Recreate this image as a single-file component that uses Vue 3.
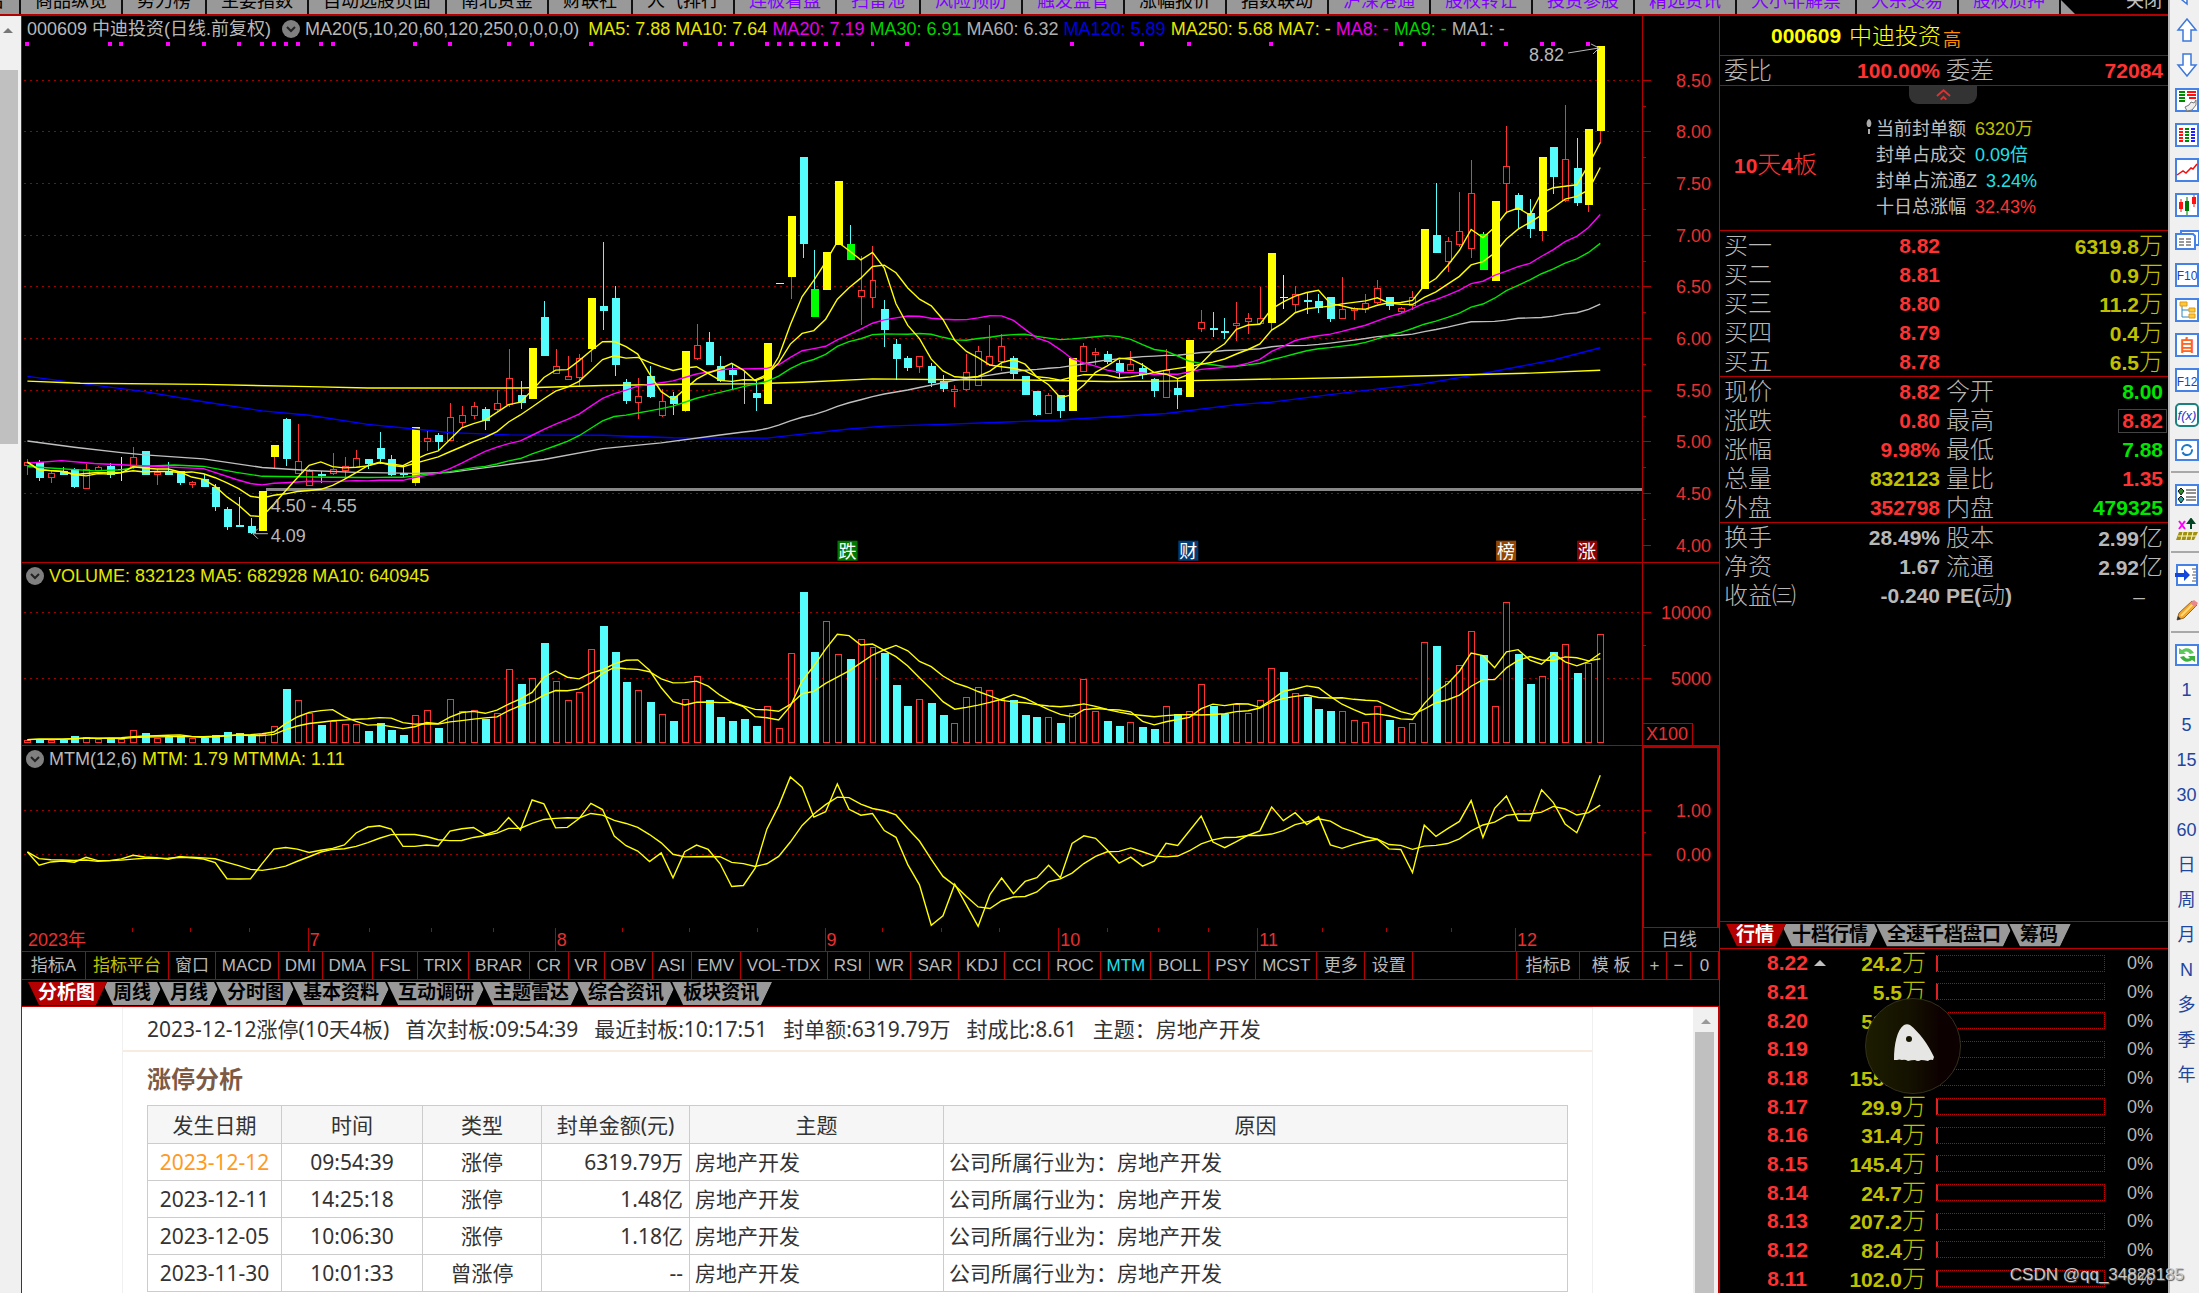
<script setup>
// Candles: [kind, body top, body bottom, high, low]. Kinds: R hollow rise, C fall,
// Y limit-up, G limit-down side, W/w flat. Heights are in plot units (PU per pixel).
const PU = 2.751
const OFF = 16
const raw = `R 1272 1280 1262 1306|C 1270 1314 1266 1322|R 1300 1313 1296 1330|C 1296 1306 1284 1306|C 1290 1339 1288 1343|R 1290 1342 1276 1342|R 1284 1294 1282 1296|C 1281 1306 1275 1314|w 1289 1291 1256 1322|R 1256 1282 1229 1290|C 1242 1306 1242 1306|R 1298 1304 1290 1335|C 1296 1306 1270 1308|C 1297 1330 1295 1335|R 1325 1328 1323 1342|C 1317 1339 1304 1339|C 1340 1395 1332 1405|C 1401 1450 1395 1459|C 1443 1446 1368 1449|C 1448 1467 1425 1469|Y 1352 1462 1352 1462|Y 1225 1256 1225 1290|C 1154 1264 1150 1281|R 1267 1300 1166 1300|R 1296 1333 1290 1338|C 1303 1306 1297 1328|R 1289 1300 1245 1306|R 1281 1292 1258 1318|R 1259 1284 1237 1287|C 1262 1276 1262 1290|C 1233 1264 1188 1276|C 1262 1306 1253 1309|C 1300 1303 1285 1312|Y 1176 1330 1176 1338|R 1206 1214 1187 1240|C 1196 1215 1190 1240|R 1148 1210 1109 1212|R 1143 1160 1118 1175|R 1118 1143 1106 1153|C 1126 1157 1120 1182|R 1109 1124 1072 1132|R 1041 1112 961 1120|C 1088 1109 1047 1124|Y 957 1098 957 1098|C 873 979 828 979|R 1007 1027 961 1030|R 1034 1044 980 1046|R 986 1036 973 1065|Y 821 959 821 997|C 841 856 667 907|C 821 1003 788 1034|C 1052 1104 1044 1111|R 1090 1107 1040 1153|C 1035 1091 1007 1096|R 1102 1143 1070 1148|C 1089 1111 1078 1141|Y 965 1130 965 1133|R 950 986 890 990|C 940 1005 914 1005|C 1006 1048 978 1052|C 1018 1032 1000 1074|W 1060 1060 1022 1112|C 1080 1095 1045 1130|Y 944 1111 944 1111|Y 779 781 779 781|Y 593 761 593 823|C 432 670 432 711|G 795 873 688 873|Y 692 799 692 799|Y 498 675 498 675|G 672 716 618 716|R 797 814 705 894|R 771 818 676 848|C 849 909 824 955|C 947 988 932 1046|C 986 1013 978 1021|R 979 1008 979 1025|C 1006 1054 998 1065|C 1047 1070 1031 1078|R 1069 1077 1060 1120|R 1023 1069 973 1076|R 966 1060 952 1062|R 979 1000 895 1006|R 953 994 920 1021|C 986 1028 980 1043|C 1034 1087 1034 1087|C 1077 1141 1077 1145|R 1086 1136 1082 1140|C 1086 1132 1086 1149|Y 986 1130 986 1130|R 953 1020 944 1022|R 968 970 957 1003|C 973 997 965 1000|C 998 1025 990 1040|R 1000 1017 965 1018|C 1013 1032 998 1043|C 1044 1075 1040 1091|R 1018 1091 960 1094|C 1067 1087 1044 1124|Y 936 1091 936 1091|R 887 901 853 914|C 902 909 857 926|C 911 913 874 932|R 888 895 832 938|R 876 884 862 918|R 876 888 790 890|Y 697 889 697 908|w 817 820 757 850|R 808 835 787 862|C 825 828 804 865|C 829 846 808 860|C 816 877 816 885|R 851 874 762 874|R 847 850 845 879|R 833 849 808 860|R 793 831 771 835|C 816 843 816 852|R 847 856 845 862|R 818 838 800 852|Y 631 795 631 795|C 647 695 503 695|R 664 719 652 747|R 636 672 527 680|R 532 681 440 711|G 643 744 638 744|Y 552 773 552 773|R 458 503 347 590|C 536 577 531 626|C 586 629 548 654|Y 433 636 433 662|C 404 486 404 534|R 437 550 288 555|C 461 558 379 567|Y 354 563 354 584|Y 127 360 127 394`
const bars = raw.split('|').map((s) => { const [k, ...n] = s.split(' '); return [k, ...n.map(Number)] })
const volTop = [539,536,539,539,528,530,537,536,537,511,520,533,530,531,535,534,524,515,519,528,522,498,388,421,458,496,482,493,493,514,489,511,524,466,449,505,416,453,449,478,458,327,371,354,249,364,421,395,268,199,276,366,390,425,462,484,416,349,421,470,484,478,497,439,503,278,96,276,183,283,298,237,260,280,375,438,416,430,466,489,412,381,390,417,421,466,470,471,488,458,358,454,484,497,485,502,506,439,462,453,372,437,462,433,458,421,323,335,399,412,448,452,454,480,485,439,479,502,489,246,258,363,314,214,286,439,125,281,371,349,277,251,340,308,223]
const cx = (i) => 5.4 + 11.745 * i
const py = (u) => u / PU - OFF
const vy = (u) => u / 3 - 3
const my = (u) => u / 3 - 186
const R = Math.round
const color = { R: '#ff3232', C: '#54fcfc', Y: '#ffff00', G: '#00ff00', W: '#c0c0c0', w: '#e8e8e8' }
const candles = bars.map(([k, t, b, h, l], i) => {
  const x = R(cx(i))
  const top = R(py(t))
  const hgt = Math.max(R(py(b)) - top, k === 'Y' || k === 'w' ? 1 : 2)
  return { k, x, top, hgt, hi: R(py(h)), lo: R(py(l)), fill: color[k], wick: k === 'Y' ? color.R : k === 'G' ? color.C : color[k] }
})
const volumes = volTop.map((v, i) => {
  const k = bars[i][0]
  return { x: R(cx(i)), y: R(vy(v)), h: 180 - R(vy(v)), down: 'CGW'.includes(k) || i === 107 }
})
const close = bars.map(([k, t, b]) => (k === 'C' || k === 'G' ? b : t))
const avg = (arr, n) => arr.map((_, i) => { const s = arr.slice(Math.max(0, i - n + 1), i + 1); return s.reduce((a, c) => a + c, 0) / s.length })
const toLine = (pts, f) => pts.map(([i, v]) => `${cx(i).toFixed(1)},${f(v).toFixed(1)}`).join(' ')
const line = (arr, f) => toLine(arr.map((v, i) => [i, v]), f)
const seeded = (n, seed) => [...seed, ...avg(close, n).map((v, i) => [i, v]).slice(n - 1)]
const ma250 = [[0,1049],[4.5,1055],[15,1058],[24,1064],[29,1068],[42,1068],[49,1061],[57,1057],[62,1056],[66,1052],[72,1043],[79,1045],[85,1046],[92,1050],[97,1049],[105,1044],[113,1039],[121,1033],[128,1027],[134,1019]]
const ma120 = [[0,1036],[3.7,1052],[10,1078],[15,1106],[20,1131],[24,1143],[29,1168],[33,1181],[36,1191],[41,1197],[49,1198],[55,1205],[63,1206],[66,1195],[70,1181],[73,1173],[78,1168],[84,1161],[88,1156],[92,1148],[97,1138],[103,1114],[106,1107],[112,1082],[119,1056],[124,1028],[130,991],[134,957]]
const priceLines = [
  { c: '#0000ff', p: toLine(ma120, py) },
  { c: '#ffff00', p: toLine(ma250, py) },
  { c: '#c0c0c0', p: toLine(seeded(60, [[0,1214],[4,1231],[8,1246],[10,1252],[15,1263],[20,1287],[24,1295],[28,1300],[33,1303],[36,1300],[40,1283],[44,1265],[49,1235],[54,1219]]), py) },
  { c: '#00e600', p: toLine(seeded(30, [[0,1284],[5.7,1296],[8,1293],[9.7,1284],[12.5,1280],[15,1284],[17.8,1300],[20,1311],[26,1314]]), py) },
  { c: '#ff00ff', p: toLine(seeded(20, [[0,1275],[2.9,1268],[5.7,1276],[9.7,1282],[15,1290],[17.8,1320]]), py) },
  { c: '#ffff00', p: line(avg(close, 10), py) },
  { c: '#ffff00', p: line(avg(close, 5), py) },
]
const volLines = [line(avg(volTop, 5), vy), line(avg(volTop, 10), vy)]
const mtm = close.map((c, i) => (i < 12 ? [876,916,906,903,907,892,902,902,897,886,891,893][i] : 882 + ((c - close[i - 12]) * 132) / 284.4))
const mtmLines = [line(mtm, my), line(avg(mtm, 6), my)]
const marks = [0,7,8,12,15,18,20,21,22,23,25,26,33,36,41,43,48,56,59,60,63,64,65,66,67,68,69,72,75,89,95,99,106,117,119,124,126,129,130,133].map((i) => R(cx(i)) - 2)
const priceAxis = Array.from({ length: 10 }, (_, i) => ({ y: R(63.5 + i * 51.7), t: (8.5 - i * 0.5).toFixed(2) }))
const badges = [{ x: 816, t: '跌', c: '#007800' }, { x: 1157, t: '财', c: '#003c78' }, { x: 1475, t: '榜', c: '#964600' }, { x: 1556, t: '涨', c: '#8c0000' }]
const months = [{ x: 287, t: '7' }, { x: 534, t: '8' }, { x: 804, t: '9' }, { x: 1038, t: '10' }, { x: 1237, t: '11' }, { x: 1495, t: '12' }]
const weekTicks = [111,169,228,348,410,472,601,668,736,862,921,979,1087,1138,1188,1302,1366,1431]
const legend = [['MA5: 7.88','#e6e600'],['MA10: 7.64','#e6e600'],['MA20: 7.19','#e600e6'],['MA30: 6.91','#00d200'],['MA60: 6.32','#b0b0b0'],['MA120: 5.89','#0000e0'],['MA250: 5.68','#e6e600'],['MA7: -','#e6e600'],['MA8: -','#e600e6'],['MA9: -','#00d200'],['MA1: -','#b0b0b0']]

const topTabs = ['商品纵览','势力榜','主要指数','自动选股页面','南北资金','财联社','人气排行','*连板看盘','*扫雷池','*风险预防','*触发监管','涨幅报价','指数联动','*沪深港通','*股权转让','*投资参股','*精选资讯','*大小非解禁','*大宗交易','*股权质押'].map((t) => ({ t: t.replace('*', ''), hot: t[0] === '*' }))
const indicators = ['指标A','指标平台','窗口','MACD','DMI','DMA','FSL','TRIX','BRAR','CR','VR','OBV','ASI','EMV','VOL-TDX','RSI','WR','SAR','KDJ','CCI','ROC','MTM','BOLL','PSY','MCST','更多','设置','','指标B','模 板','+','−','0']
const viewTabs = ['分析图','周线','月线','分时图','基本资料','互动调研','主题雷达','综合资讯','板块资讯']
const quoteTabs = ['行情','十档行情','全速千档盘口','筹码']

const sealInfo = [['当前封单额','6320万','olive'],['封单占成交','0.09倍','cyan'],['封单占流通Z','3.24%','cyan'],['十日总涨幅','32.43%','red']]
const bids = [['买一','8.82','6319.8'],['买二','8.81','0.9'],['买三','8.80','11.2'],['买四','8.79','0.4'],['买五','8.78','6.5']]
const stats = [['现价','8.82','red','今开','8.00','green'],['涨跌','0.80','red','最高','8.82','red boxed'],['涨幅','9.98%','red','最低','7.88','green'],['总量','832123','olive','量比','1.35','red'],['外盘','352798','red','内盘','479325','green']]
const basics = [['换手','28.49%','股本','2.99','亿'],['净资','1.67','流通','2.92','亿'],['收益㈢','-0.240','PE(动)','–','']]
const levels = [['8.22','24.2'],['8.21','5.5'],['8.20','51.3'],['8.19','0.8'],['8.18','155.2'],['8.17','29.9'],['8.16','31.4'],['8.15','145.4'],['8.14','24.7'],['8.13','207.2'],['8.12','82.4'],['8.11','102.0']]

const summary = ['2023-12-12涨停(10天4板)','首次封板:09:54:39','最近封板:10:17:51','封单额:6319.79万','封成比:8.61','主题：房地产开发']
const records = [['2023-12-12','09:54:39','涨停','6319.79万'],['2023-12-11','14:25:18','涨停','1.48亿'],['2023-12-05','10:06:30','涨停','1.18亿'],['2023-11-30','10:01:33','曾涨停','--']]
const periods = ['1','5','15','30','60','日','周','月','N','多','季','年']
</script>

<template>
  <div class="app">
    <div class="workspace">
      <nav class="topbar">
        <button class="toptab first">统计平台</button>
        <button v-for="t in topTabs" :key="t.t" class="toptab" :class="{ hot: t.hot }">{{ t.t }}</button>
        <i class="slope"></i>
        <button class="close">关闭</button>
      </nav>
      <div class="body">
        <div class="sidescroll"><i class="up"></i><i class="thumb"></i></div>

        <main class="center">
          <section class="panel">
            <div class="legend">
              <span>000609 中迪投资(日线.前复权)</span>
              <button class="fold" aria-label="折叠"><svg viewBox="0 0 18 18"><circle cx="9" cy="9" r="9" fill="#808080" /><path d="M5 7l4 4 4-4" fill="none" stroke="#222" stroke-width="2" /></svg></button>
              <span>MA20(5,10,20,60,120,250,0,0,0,0)</span>
              <span v-for="(l, i) in legend" :key="l[0]" :class="{ lead: i === 0 }" :style="{ color: l[1] }">{{ l[0] }}</span>
            </div>
            <svg class="chart" viewBox="0 0 1698 547">
              <g shape-rendering="crispEdges">
                <line v-for="a in priceAxis.slice(0, 9)" :key="a.y" x1="2" :y1="a.y + 0.5" x2="1620" :y2="a.y + 0.5" class="grid" />
                <rect v-for="m in marks" :key="m" :x="m" y="26" width="4" height="4" fill="#f0f" />
                <rect x="244" y="472" width="1377" height="3" fill="#888" />
                <g v-for="c in candles" :key="c.x">
                  <line :x1="c.x + 0.5" :x2="c.x + 0.5" :y1="c.hi" :y2="c.lo" :stroke="c.wick" />
                  <rect v-if="c.k === 'R'" :x="c.x - 2.5" :y="c.top + 0.5" width="6" :height="c.hgt" fill="#000" :stroke="c.fill" />
                  <rect v-else-if="c.k !== 'W'" :x="c.x - 3" :y="c.top" width="8" :height="c.hgt" :fill="c.fill" />
                </g>
              </g>
              <polyline v-for="(l, i) in priceLines" :key="i" :points="l.p" :stroke="l.c" class="curve" />
              <g shape-rendering="crispEdges" class="frame">
                <path d="M1621.500 0V547M0 546.500H1698" />
                <path v-for="a in priceAxis" :key="a.y" :d="`M1621 ${a.y + 0.5}h9M1621 ${a.y + 26.5}h4`" />
              </g>
              <text v-for="a in priceAxis" :key="a.t" x="1690" :y="a.y + 7" class="tick">{{ a.t }}</text>
              <g class="note">
                <text x="1508" y="45">8.82</text>
                <path d="M1547 37L1578 32M1570 28L1578 32L1572 38" />
                <text x="249" y="496">4.50 - 4.55</text>
                <text x="249" y="526">4.09</text>
                <path d="M246 518H231M236 513L231 518L236 523" />
              </g>
              <g v-for="b in badges" :key="b.t">
                <rect :x="b.x" y="525" width="20" height="20" :fill="b.c" />
                <text :x="b.x + 10" y="542" class="badge">{{ b.t }}</text>
              </g>
            </svg>
          </section>

          <section class="panel">
            <div class="legend">
              <button class="fold" aria-label="折叠"><svg viewBox="0 0 18 18"><circle cx="9" cy="9" r="9" fill="#808080" /><path d="M5 7l4 4 4-4" fill="none" stroke="#222" stroke-width="2" /></svg></button>
              <span class="yellow">VOLUME: 832123</span><span class="yellow">MA5: 682928</span><span class="yellow">MA10: 640945</span>
            </div>
            <svg class="chart" viewBox="0 0 1698 183">
              <g shape-rendering="crispEdges">
                <line x1="2" x2="1620" y1="49.500" y2="49.500" class="grid" />
                <line x1="2" x2="1620" y1="115.500" y2="115.500" class="grid" />
                <template v-for="v in volumes" :key="v.x">
                  <rect v-if="v.down" :x="v.x - 3" :y="v.y" width="8" :height="v.h" fill="#54fcfc" />
                  <rect v-else :x="v.x - 2.5" :y="v.y + 0.5" width="6" :height="v.h - 1" fill="#000" stroke="#ff3232" />
                </template>
              </g>
              <polyline v-for="p in volLines" :key="p" :points="p" stroke="#ffff00" class="curve" />
              <g shape-rendering="crispEdges" class="frame">
                <path d="M1621.500 0V183M0 182.500H1698M1621 49.500h9M1621 82.500h4M1621 115.500h9M1621 160.500H1671.500V183" />
              </g>
              <text x="1690" y="56" class="tick">10000</text>
              <text x="1690" y="122" class="tick">5000</text>
              <text x="1667" y="177" class="tick">X100</text>
            </svg>
          </section>

          <section class="panel">
            <div class="legend">
              <button class="fold" aria-label="折叠"><svg viewBox="0 0 18 18"><circle cx="9" cy="9" r="9" fill="#808080" /><path d="M5 7l4 4 4-4" fill="none" stroke="#222" stroke-width="2" /></svg></button>
              <span>MTM(12,6)</span><span class="yellow">MTM: 1.79</span><span class="yellow">MTMMA: 1.11</span>
            </div>
            <svg class="chart" viewBox="0 0 1698 183">
              <g shape-rendering="crispEdges">
                <line x1="2" x2="1620" y1="64.500" y2="64.500" class="grid" />
                <line x1="2" x2="1620" y1="108.500" y2="108.500" class="grid" />
              </g>
              <polyline v-for="p in mtmLines" :key="p" :points="p" stroke="#ffff00" class="curve" />
              <g shape-rendering="crispEdges" class="frame">
                <path d="M0 182.500H1698M1621 64.500h9M1621 86.500h4M1621 108.500h9" />
                <rect x="1622" y="1" width="75" height="181" stroke-width="2" />
              </g>
              <text x="1690" y="71" class="tick">1.00</text>
              <text x="1690" y="115" class="tick">0.00</text>
            </svg>
          </section>

          <svg class="chart" viewBox="0 0 1698 24">
            <g shape-rendering="crispEdges" class="frame">
              <path d="M0 23.500H1698M1621.500 0V24" />
              <path v-for="m in months" :key="m.x" :d="`M${m.x - 0.5} 0V24`" />
              <path v-for="w in weekTicks" :key="w" :d="`M${w - 0.5} 0v4`" />
            </g>
            <text x="6" y="18" class="tick start">2023年</text>
            <text v-for="m in months" :key="m.t" :x="m.x + 1" y="18" class="tick start">{{ m.t }}</text>
            <text x="1640" y="18" class="tick start grey">日线</text>
          </svg>

          <div class="indicators">
            <template v-for="t in indicators" :key="t">
              <button v-if="t" :class="{ olive: t === '指标平台', cyan: t === 'MTM' }">{{ t }}</button>
              <span v-else></span>
            </template>
          </div>
          <div class="tabs view">
            <button v-for="(t, i) in viewTabs" :key="t" class="tab" :class="{ on: i === 0 }"><span>{{ t }}</span></button>
          </div>

          <section class="report">
            <div class="sheet">
              <p class="summary"><span v-for="s in summary" :key="s">{{ s }}</span></p>
              <h2>涨停分析</h2>
              <table>
                <colgroup><col class="c1" /><col class="c2" /><col class="c3" /><col class="c4" /><col class="c5" /><col /></colgroup>
                <thead><tr><th>发生日期</th><th>时间</th><th>类型</th><th>封单金额(元)</th><th>主题</th><th>原因</th></tr></thead>
                <tbody>
                  <tr v-for="(r, i) in records" :key="r[0]">
                    <td :class="{ today: i === 0 }">{{ r[0] }}</td><td>{{ r[1] }}</td><td>{{ r[2] }}</td>
                    <td class="num">{{ r[3] }}</td><td class="txt">房地产开发</td><td class="txt">公司所属行业为：房地产开发</td>
                  </tr>
                </tbody>
              </table>
            </div>
            <div class="vscroll"><i class="up"></i><i class="thumb"></i></div>
          </section>
        </main>

        <aside class="quote">
          <header class="name"><b>000609</b><span>中迪投资</span><small>高</small></header>
          <div class="block single">
            <div class="row"><span>委比</span><b class="red">100.00%</b><span>委差</span><b class="red">72084</b></div>
          </div>
          <div class="seal">
            <button class="notch" aria-label="收起"><svg viewBox="0 0 16 12"><path d="M1 7l7-6 7 6M5 11l3-3 3 3" fill="none" stroke="#e03030" stroke-width="2" /></svg></button>
            <div class="streak"><b>10</b>天<b>4</b>板</div>
            <div class="seallist">
              <svg class="pin" viewBox="0 0 6 16"><path d="M3 0c3 2 3 6 1 8h-2c-2-2-2-6 1-8zM2 10h2v5h-2z" fill="#aaa" /></svg>
              <p v-for="s in sealInfo" :key="s[0]"><span>{{ s[0] }}</span><span :class="s[2]">{{ s[1] }}</span></p>
            </div>
          </div>
          <div class="block">
            <div v-for="b in bids" :key="b[0]" class="row"><span>{{ b[0] }}</span><b class="red">{{ b[1] }}</b><span></span><b class="olive">{{ b[2] }}<span>万</span></b></div>
          </div>
          <div class="block">
            <div v-for="s in stats" :key="s[0]" class="row"><span>{{ s[0] }}</span><b :class="s[2]">{{ s[1] }}</b><span>{{ s[3] }}</span><b :class="s[5]">{{ s[4] }}</b></div>
          </div>
          <div class="block last">
            <div v-for="(s, i) in basics" :key="s[0]" class="row"><span>{{ s[0] }}</span><b>{{ s[1] }}</b><span v-if="i < 2">{{ s[2] }}</span><span v-else class="pe"><b>PE(</b>动<b>)</b></span><b :class="{ dash: i === 2 }">{{ s[3] }}<span>{{ s[4] }}</span></b></div>
          </div>
          <div class="tabs depth">
            <button v-for="(t, i) in quoteTabs" :key="t" class="tab" :class="{ on: i === 0 }"><span>{{ t }}</span></button>
          </div>
          <div class="levels">
            <div v-for="(l, i) in levels" :key="l[0]" class="level">
              <b class="red">{{ l[0] }}</b><i :class="{ caret: i === 0 }"></i><b class="olive">{{ l[1] }}<span>万</span></b><i class="bar"></i><span>0%</span>
            </div>
            <button class="float" aria-label="助手">
              <svg viewBox="0 0 94 94"><path d="M28 61C28 45 31 31 38 26C40 25 42 25 44 26C53 33 62 45 68 58L67 61Q64 60 62 62Q58 61 55 61Q52 63 49 61Q45 61 42 62Q39 60 36 61Q33 60 31 61Z" fill="#e6e6e4" /><circle cx="43" cy="40" r="3" fill="#151500" /></svg>
            </button>
          </div>
        </aside>
      </div>
    </div>

    <nav class="tools">
      <button aria-label="后退"><svg viewBox="0 0 24 24"><path d="M1 12L12 3V8H23V16H12V21Z" class="arrow" /></svg></button>
      <button aria-label="上移"><svg viewBox="0 0 24 24"><path d="M12 1L21 12H16V23H8V12H3Z" class="arrow" /></svg></button>
      <button aria-label="下移"><svg viewBox="0 0 24 24"><path d="M12 23L21 12H16V1H8V12H3Z" class="arrow" /></svg></button>
      <button aria-label="列表设置"><svg viewBox="0 0 24 24"><rect x="1" y="1" width="22" height="22" class="box" /><path d="M4 4h6M4 7h6M4 10h6M4 13h6" stroke="#080" stroke-width="2" /><path d="M12 4h9M12 7h9M14 10h7" stroke="#f11" stroke-width="2" /><path d="M10 19l4-2 2-3 3 1 2-3v5l-4 5-5 1z" fill="#eee" stroke="#777" /></svg></button>
      <button aria-label="报价列表"><svg viewBox="0 0 24 24"><rect x="1" y="1" width="22" height="22" class="box" /><path d="M4 6h4M4 9h4M4 12h4M4 15h4M4 18h4" stroke="#f11" stroke-width="2" /><path d="M10 6h4M10 9h4M10 12h4M10 15h4M10 18h4" stroke="#080" stroke-width="2" /><path d="M16 6h4M16 9h4M16 12h4M16 15h4M16 18h4" stroke="#22f" stroke-width="2" /></svg></button>
      <button aria-label="分时走势"><svg viewBox="0 0 24 24"><rect x="1" y="1" width="22" height="22" class="box" /><path d="M2 17l6-4 3 2 5-5 2 1 4-5" fill="none" stroke="#e11" stroke-width="1.5" /></svg></button>
      <button aria-label="K线"><svg viewBox="0 0 24 24"><rect x="1" y="1" width="22" height="22" class="box" /><path d="M6 6v13M19 2v12" stroke="#f11" /><path d="M4 9h4v7h-4zM17 4h4v7h-4z" fill="#f11" /><path d="M12 4v18" stroke="#070" /><path d="M10 8h4v10h-4z" fill="#070" /></svg></button>
      <button aria-label="资讯"><svg viewBox="0 0 24 24"><path d="M6 3h18v14h-18z" class="box" /><path d="M1 6h17l2 2v13h-19z" class="box" /><path d="M4 11h5M11 11h5M4 14h5M11 14h5M4 17h5M11 17h5" stroke="#333" /></svg></button>
      <button aria-label="F10"><svg viewBox="0 0 24 24"><rect x="1" y="1" width="22" height="22" class="box" /><text x="12" y="17" class="fkey">F10</text></svg></button>
      <button aria-label="板块树"><svg viewBox="0 0 24 24"><rect x="1" y="1" width="22" height="22" class="box" /><path d="M7 8v11h7M7 12h7" fill="none" stroke="#38b" /><path d="M5 4h7v4h-7zM14 10h6v4h-6zM14 16h6v4h-6z" fill="#ffc83c" stroke="#e09a10" /></svg></button>
      <button aria-label="自选"><svg viewBox="0 0 24 24"><rect x="1" y="1" width="22" height="22" class="box" /><text x="12" y="18" class="fkey self">自</text></svg></button>
      <button aria-label="F12"><svg viewBox="0 0 24 24"><rect x="1" y="1" width="22" height="22" class="box" /><text x="12" y="18" class="fkey">F12</text></svg></button>
      <button aria-label="公式"><svg viewBox="0 0 24 24"><rect x="1" y="1" width="22" height="22" rx="4" fill="#fff" stroke="#1a8080" stroke-width="2" /><text x="12" y="17" class="fkey fx">f(x)</text></svg></button>
      <button aria-label="刷新"><svg viewBox="0 0 24 24"><rect x="1" y="2" width="22" height="20" class="box" /><circle cx="12" cy="12" r="5" fill="none" stroke="#1a78c8" stroke-width="2" stroke-dasharray="13 2" /></svg></button>
      <hr />
      <button aria-label="选项"><svg viewBox="0 0 24 24"><rect x="1" y="2" width="22" height="20" class="box" /><path d="M6 5l3 3-3 4-3-4z" fill="#2a8a2a" stroke="#111" /><path d="M6 13l3 3-3 4-3-4z" fill="#2a9a9a" stroke="#111" /><path d="M11 7h10M11 10h10M11 14h10M11 17h10" stroke="#222" /></svg></button>
      <button aria-label="除权"><svg viewBox="0 0 24 24"><path d="M4 3l6 8M10 3l-6 8" stroke="#f0f" stroke-width="2" /><path d="M16 11V3M13 5l3-4 3 4z" fill="#042" stroke="#042" stroke-width="2" /><path d="M4 14h19l-4 8H1z" fill="#a09010" /><path d="M3 18h18M8 14l-2 8M13 14l-2 8M18 14l-2 8" stroke="#fff8c0" /></svg></button>
      <hr />
      <button aria-label="跳转"><svg viewBox="0 0 24 24"><rect x="2" y="2" width="20" height="20" class="box" /><path d="M0 10h9V6l6 6-6 6v-4H0z" fill="#1446dc" /><path d="M17 6h4M18 9h3M17 12h4M18 15h3M17 18h4" stroke="#555" /></svg></button>
      <button aria-label="画线"><svg viewBox="0 0 24 24"><path d="M2 22l2-7L17 3l5 4L9 20z" fill="#f0a830" stroke="#a06418" /><path d="M6 18L19 5" stroke="#ffd878" stroke-width="2" /><path d="M15 5l4-3 4 3-3 4z" fill="#e8888a" /><path d="M2 22l1-4 3 3z" fill="#333" /></svg></button>
      <hr />
      <button aria-label="切换"><svg viewBox="0 0 24 24"><rect x="1" y="2" width="22" height="20" class="box" /><path d="M4 11V5l3 2c4-3 9-2 12 3l-4 1c-2-3-4-3-6-2l2 2z" fill="#5cc85c" /><path d="M20 13v6l-3-2c-4 3-9 2-12-3l4-1c2 3 4 3 6 2l-2-2z" fill="#3cb03c" /></svg></button>
      <button v-for="p in periods" :key="p" class="period">{{ p }}</button>
    </nav>
    <div class="mark">CSDN @qq_34828185</div>
  </div>
</template>

<style>
body { margin: 0; background: #000; overflow: hidden; }
</style>

<style scoped>
.app { position: relative; display: flex; height: 100vh; overflow: hidden; background: #000; color: #b8b8b8; font: 18px/20px "Liberation Sans", "Noto Sans CJK SC", sans-serif; }
button { margin: 0; padding: 0; border: 0; background: none; color: inherit; font: inherit; white-space: nowrap; }
.workspace { flex: 1; min-width: 0; display: flex; flex-direction: column; }
.topbar { display: flex; height: 14px; flex: none; overflow: hidden; border-bottom: 2px solid #b40000; }
.toptab { display: flex; align-items: flex-end; justify-content: center; height: 14px; padding: 0 14px 3px; background: #999; color: #000; border-right: 2px solid #111; line-height: 20px; flex: none; }
.toptab.first { width: 21px; box-sizing: border-box; justify-content: flex-end; overflow: hidden; padding-left: 0; }
.toptab.hot { color: #8200ff; }
.slope { width: 14px; background: #999; clip-path: polygon(0 0, 0 0, 100% 100%, 0 100%); }
.close { margin-left: auto; padding: 0 6px 3px; height: 14px; display: flex; align-items: flex-end; color: #c0c0c0; }
.body { flex: 1; min-height: 0; display: flex; }
.sidescroll { flex: none; width: 21px; background: #f0f0f0; border-right: 1px solid #c00000; display: flex; flex-direction: column; }
.up { width: 0; border: 5px solid transparent; border-top: 0; border-bottom-color: #777; margin: 12px 0 0 3px; }
.sidescroll .thumb { width: 18px; height: 374px; margin-top: 37px; background: #c0c0c0; }
.center { flex: 1; min-width: 0; display: flex; flex-direction: column; }
.panel { position: relative; flex: none; }
.chart { display: block; width: 100%; flex: none; }
.legend { position: absolute; top: 3px; left: 4px; display: flex; align-items: center; gap: 5px; white-space: nowrap; }
.lead { margin-left: 4px; }
.fold { width: 18px; height: 18px; }
.panel:first-child .fold { margin: 0 0 0 6px; }
.panel:first-child .legend { left: 5px; }
.fold svg { display: block; }
.yellow { color: #e6e600; }
.grid { stroke: #a00000; stroke-dasharray: 2 4; }
.curve { fill: none; stroke-width: 1.4; }
.frame path, .frame rect { fill: none; stroke: #b40000; }
.tick { fill: #e83030; text-anchor: end; font-size: 18px; }
.tick.start { text-anchor: start; }
.tick.grey { fill: #b8b8b8; }
.note text { fill: #b8b8b8; font-size: 18px; }
.note path { fill: none; stroke: #b8b8b8; }
.badge { fill: #fff; font-size: 18px; text-anchor: middle; }
.indicators { flex: none; height: 27px; display: grid; border-bottom: 1px solid #b40000; grid-template-columns: 64fr 83fr 47fr 63fr 44fr 50fr 45fr 51fr 61fr 39fr 36fr 48fr 39fr 49fr 87fr 42fr 42fr 48fr 46fr 44fr 52fr 50fr 58fr 47fr 61fr 48fr 48fr 104fr 63fr 63fr 24fr 24fr 28fr; }
.indicators > * { min-width: 0; border-right: 1px solid #b40000; font-size: 17px; }
.olive { color: #c0c000; }
.cyan { color: #20e0e8; }
.red { color: #ff3232; }
.green { color: #00e600; }
.tabs { flex: none; display: flex; align-items: center; box-sizing: border-box; height: 27px; padding-left: 4px; border-bottom: 1px solid #c00000; }
.tab { position: relative; height: 23px; padding: 0 13px; margin-right: -7px; background: #000; color: #000; font-size: 19px; font-weight: 700; clip-path: polygon(0 0, 100% 0, calc(100% - 11px) 100%, 11px 100%); }
.tab::before { content: ""; position: absolute; inset: 0 0 0 2px; background: #999; clip-path: polygon(0 0, 100% 0, calc(100% - 11px) 100%, 11px 100%); }
.tab span { position: relative; }
.tab.on { z-index: 1; color: #fff; padding: 0 12px; }
.tab.on::before { background: #b40000; }
.report { flex: 1; min-height: 0; display: flex; background: #fff; overflow: hidden; color: #333; font: 21px/28px "Noto Sans", "Noto Sans CJK SC", sans-serif; }
.sheet { flex: 1; margin: 0 100px; border: 1px solid #f0f0f0; border-width: 1px 1px 0; }
.summary { display: flex; gap: 16px; margin: 0; height: 42px; align-items: center; padding-left: 24px; border-bottom: 2px solid #f8ece0; white-space: nowrap; }
h2 { margin: 12px 24px; font-size: 24px; line-height: 29px; font-weight: 600; color: #7d5a46; }
table { width: calc(100% - 48px); margin: 0 24px; table-layout: fixed; border-collapse: collapse; }
.c1 { width: 134px; } .c2 { width: 141px; } .c3 { width: 119px; } .c4 { width: 148px; } .c5 { width: 254px; }
th, td { box-sizing: border-box; height: 37px; padding: 0 6px; border: 1px solid #ccc; text-align: center; font-weight: 400; white-space: nowrap; }
th { height: 38px; background: #f6f6f6; }
.num { text-align: right; }
.txt { text-align: left; padding-left: 5px; }
.today { color: #ff9a1e; }
.vscroll { flex: none; width: 25px; background: #f0f0f0; border-right: 1px solid #c00000; }
.vscroll .up { display: block; margin: 12px 0 0 8px; border-bottom-color: #999; }
.vscroll .thumb { display: block; width: 19px; height: 280px; margin: 8px 0 0 2px; background: #c0c0c0; }
.quote { flex: none; width: 449px; box-sizing: border-box; border-left: 1px solid #c80000; display: flex; flex-direction: column; }
.quote b { font-size: 21px; font-weight: 700; }
.name { display: flex; align-items: center; height: 39px; padding-left: 51px; border-bottom: 1px solid #b40000; color: #ffff00; font-size: 23px; }
.name span { margin-left: 8px; font-weight: 300; }
.name small { margin: 8px 0 0 2px; font-size: 18px; color: #ff8c00; }
.block { border-bottom: 1px solid #b40000; }
.block.last { border: 0; }
.row { display: grid; grid-template-columns: 80px 136px 80px 1fr; align-items: center; height: 29px; padding: 0 5px 0 4px; }
.row > b { text-align: right; white-space: nowrap; }
.row > span, .row b span { font-size: 24px; line-height: 28px; font-weight: 300; white-space: nowrap; }
.row > span:nth-child(3) { padding-left: 6px; }
.row .boxed { justify-self: end; margin-right: -4px; padding: 2px 4px; outline: 1px solid #444; outline-offset: -1px; }
.row .dash { padding-right: 18px; font-weight: 400; }
.seal { position: relative; display: flex; align-items: center; height: 144px; border-bottom: 1px solid #b40000; }
.notch { position: absolute; top: 0; left: 189px; width: 68px; height: 18px; background: #333; border-radius: 0 0 9px 9px; }
.notch svg { display: block; width: 15px; height: 12px; margin: 0 auto; }
.streak { width: 156px; padding: 14px 0 0 14px; box-sizing: border-box; color: #ff3232; font-size: 24px; font-weight: 300; white-space: nowrap; }
.seallist { position: relative; padding-top: 20px; color: #c0c0c0; }
.pin { position: absolute; left: -10px; top: 23px; width: 6px; height: 16px; }
.seallist p { margin: 0; height: 26px; line-height: 26px; display: flex; gap: 9px; }
.depth { margin-top: auto; height: 28px; border-top: 1px solid #b40000; }
.levels { position: relative; height: 344px; flex: none; display: grid; grid-auto-rows: 1fr; }
.level { display: grid; grid-template-columns: 40px 18px 101px 170px 1fr; align-items: center; padding: 0 15px 0 47px; }
.level > b { white-space: nowrap; text-align: right; }
.level b span { font-size: 24px; line-height: 28px; font-weight: 300; }
.level > span { text-align: right; }
.caret { border: 6px solid transparent; border-top: 0; border-bottom-color: #c0c0c0; width: 0; margin-left: 7px; }
.level .bar { margin-left: 10px; width: 169px; height: 17px; box-sizing: border-box; border: 1px dotted #c80000; border-left: 2px solid #e02020; }
.float { position: absolute; left: 145px; top: 49px; width: 96px; height: 96px; border-radius: 50%; border: 1px solid #33301c; background: linear-gradient(90deg, #1c1c00, #141200 45%, #0c0000 80%); }
.float svg { display: block; }
.tools { flex: none; width: 31px; box-sizing: border-box; background: #f0f0f0; border-left: 2px solid #b8b8b8; display: flex; flex-direction: column; align-items: center; overflow: hidden; }
.tools button { flex: none; width: 24px; height: 35px; margin-left: 4px; color: #1e46a0; }
.tools button:first-child { margin-top: -23px; }
.tools svg { display: block; width: 24px; height: 24px; }
.tools hr { flex: none; width: 28px; height: 2px; margin: 4px 0; border: 0; background: #a8a8a8; }
.arrow { fill: #fff; stroke: #3c78dc; stroke-width: 1.5; }
.box { fill: #fff; stroke: #4682e6; stroke-width: 2; }
.fkey { font-size: 12px; text-anchor: middle; fill: #1e3cc8; }
.self { font-size: 16px; font-weight: 700; fill: #ff6420; }
.fx { font-style: italic; font-size: 13px; }
.mark { position: absolute; right: 15px; bottom: 8px; font-size: 17px; color: #c8c8c8; text-shadow: 1px 1px 1px #555; }
</style>
